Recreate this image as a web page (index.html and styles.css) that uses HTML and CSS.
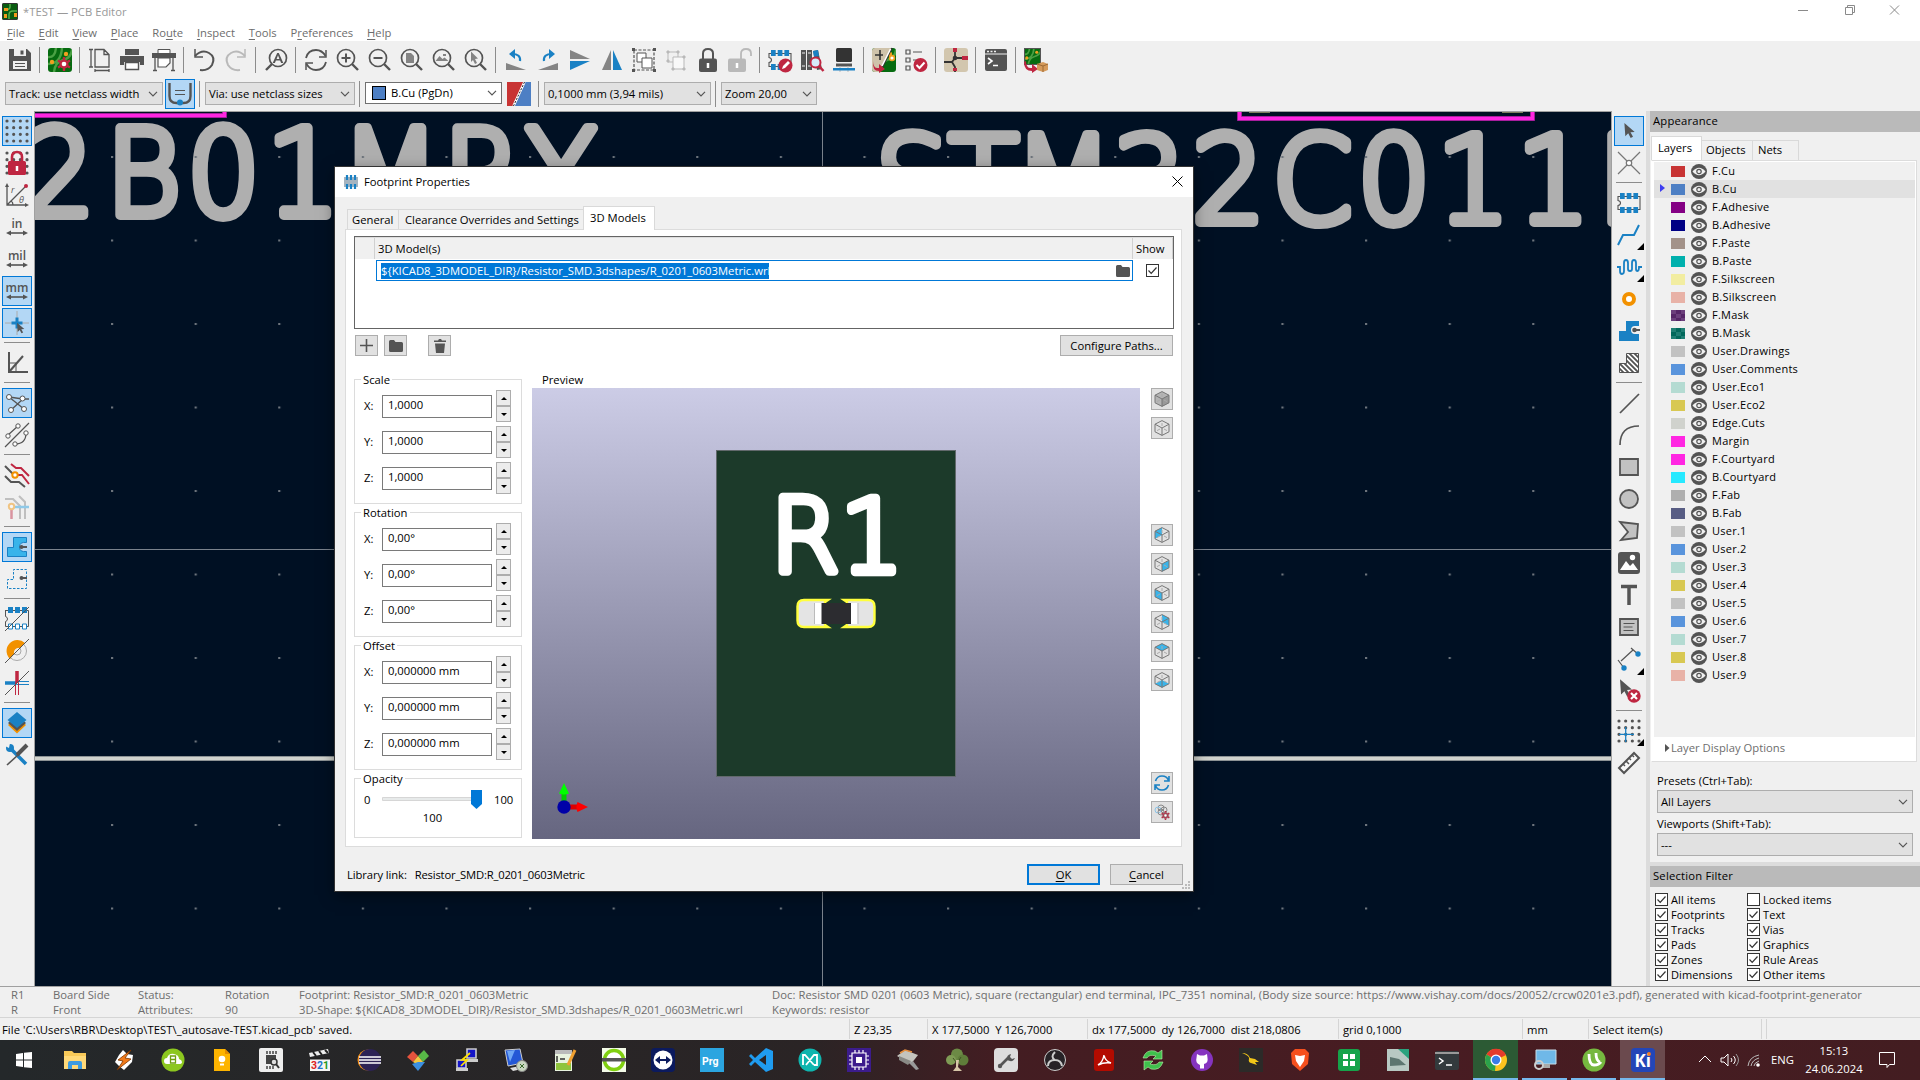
FILE: index.html
```html
<!DOCTYPE html>
<html lang="en">
<head>
<meta charset="utf-8">
<title>*TEST — PCB Editor</title>
<link rel="stylesheet" href="styles.css">
</head>
<body>
<svg class="defs" width="0" height="0">
  <symbol id="eye" viewBox="0 0 16 15"><ellipse cx="8" cy="7.5" rx="8" ry="7.5" fill="#545454"/><path d="M1.5 7.5Q8 0 14.5 7.5Q8 15 1.5 7.5z" fill="#f0f0f0"/><circle cx="8" cy="7.5" r="2.2" fill="none" stroke="#545454" stroke-width="1.2"/></symbol>
  <symbol id="tick" viewBox="0 0 13 13"><rect x=".5" y=".5" width="12" height="12" fill="#fff" stroke="#333"/><path d="M2.5 6.5l2.7 2.8L10.5 3.5" fill="none" stroke="#333" stroke-width="1.2"/></symbol>
  <symbol id="box" viewBox="0 0 13 13"><rect x=".5" y=".5" width="12" height="12" fill="#fff" stroke="#333"/></symbol>
  <symbol id="chev" viewBox="0 0 10 6"><path d="M1 .8l4 4 4-4" fill="none" stroke="#555" stroke-width="1.2"/></symbol>
  <symbol id="folder" viewBox="0 0 14 12"><path d="M0 1.5Q0 0 1.5 0H5l1.5 2H12.500q1.500 0 1.500 1.500V10.500q0 1.500-1.500 1.500h-11Q0 12 0 10.500z" fill="#545454"/></symbol>
  <symbol id="lens" viewBox="0 0 24 24"><g fill="none" stroke="#545454"><circle cx="10" cy="10" r="8.500" stroke-width="1.700"/><path d="M16 16l6 6" stroke-width="2.400"/></g></symbol>
  <symbol id="gear" viewBox="0 0 14 14"><g stroke="#bf2641" stroke-width="2.4"><path d="M7 0v14M1 3.500l12 7M1 10.500l12-7"/></g><circle cx="7" cy="7" r="4.600" fill="#bf2641"/><circle cx="7" cy="7" r="2.300" fill="#fff"/></symbol>
  <symbol id="cube" viewBox="0 0 16 16"><g fill="none" stroke="#777" stroke-width="1"><path d="M8 .6l7 3.600v7.600L8 15.400 1 11.800V4.200z"/><path d="M1 4.200L8 8l7-3.800M8 8v7.400"/><path d="M8 3v3M3 10.600l3-1.600M13 10.600l-3-1.600" stroke="#aaa"/></g></symbol>
  <symbol id="fp" viewBox="0 0 24 24"><path d="M1 5.500h22v13H1v-4q2.500-.5 2.500-2.500T1 9.500z" fill="none" stroke="#545454" stroke-width="1.100"/><path d="M3 2h4.700v6H3zM9.700 2h4.700v6H9.700zM16.400 2h4.700v6h-4.700zM3 16h4.700v6H3zM9.700 16h4.700v6H9.700zM16.400 16h4.700v6h-4.700z" fill="#1a81c4"/></symbol>
  <symbol id="dots" viewBox="0 0 24 24"><g stroke="#545454" stroke-width="3.200" stroke-linecap="round" stroke-dasharray="0 6.670" fill="none"><path d="M2 2h21M2 8.700h21M2 15.300h21M2 22h21"/></g></symbol>
  <symbol id="arrows" viewBox="0 0 24 6"><path d="M3 3h18" stroke="#545454" stroke-width="1.600"/><path d="M1 3l5-2.500v5zM23 3l-5-2.500v5z" fill="#545454"/></symbol>
  <symbol id="pointer" viewBox="0 0 12 16"><path d="M0 0l11 9.500-4.500.4 2.700 4.800-2.500 1.300-2.600-5L1 14z" fill="#545454"/></symbol>
  <symbol id="board" viewBox="0 0 24 24"><rect width="24" height="24" rx="3" fill="#066b10"/><path d="M0 9q7 1 8-9M0 16q13 0 14-16M6 24q1-10 9-12t9-10" fill="none" stroke="#4aa044" stroke-width="2.400"/><circle cx="4" cy="14" r="2.200" fill="#f0a020"/><circle cx="18" cy="6" r="2.200" fill="#f0a020"/></symbol>
</svg>

<header class="titlebar">
  <svg width="16" height="17"><rect width="16" height="17" rx="2" fill="#0a5c10"/><path d="M7 17V12q0-4 4-4h5M8 0v4q0 2-3 3" stroke="#57b04a" stroke-width="1.500" fill="none"/><path d="M2 5h4v3H2zM2 11h3v4H2zM12 10h3v4h-3z" fill="#f29a1c"/><rect x=".5" y=".5" width="15" height="16" rx="1" fill="none" stroke="#333"/></svg>
  <span>*TEST — PCB Editor</span>
  <svg class="winctl" width="110" height="12" fill="none" stroke="#8a8a8a"><path d="M4 6.500h10M51.500 3.500h7v7h-7zM53.500 3.500v-2h7v7h-2M96 1.500l9 9M105 1.500l-9 9"/></svg>
</header>
<nav class="menu"><span><u>F</u>ile</span><span><u>E</u>dit</span><span><u>V</u>iew</span><span><u>P</u>lace</span><span>Ro<u>u</u>te</span><span><u>I</u>nspect</span><span><u>T</u>ools</span><span>P<u>r</u>eferences</span><span><u>H</u>elp</span></nav>

<div class="bar bar1">
  <b><svg class="i" viewBox="0 0 24 24"><path d="M1 1h18l4 4v18H1z" fill="#545454"/><path d="M6 1h12v7H6z" fill="#f0f0f0"/><path d="M12.500 2.500h3v4h-3z" fill="#545454"/><path d="M5 13h14v8H5z" fill="#f0f0f0"/><path d="M7 15.500h10M7 18.500h10" stroke="#545454"/></svg></b><hr>
  <b><svg class="i" viewBox="0 0 24 24"><use href="#board"/><use href="#gear" x="9" y="9" width="14" height="14"/></svg></b><hr>
  <b><svg class="i" viewBox="0 0 24 24" fill="none" stroke="#545454" stroke-width="1.300"><path d="M7 1.500h9l5 5V19H7zM16 1.500v5h5M1 1.500h4M3 1.500V19M1 19h4M7 22.500h14M7 21v3M21 21v3"/></svg></b>
  <b><svg class="i" viewBox="0 0 24 24"><path d="M5 1h14v6H5zM0 8h24v9h-4v-3H4v3H0z" fill="#545454"/><path d="M5.500 14.500h13v7h-13z" fill="#fff" stroke="#545454" stroke-width="1.400"/></svg></b>
  <b><svg class="i" viewBox="0 0 24 24"><path d="M6 1.500h12v4H6z" fill="#fff" stroke="#545454"/><path d="M0 5h24v5H0z" fill="#545454"/><path d="M6 10h12v5l-4 4H6z" fill="#fff" stroke="#545454" stroke-width="1.200"/><path d="M3 10v12M21 10v12M1 22.500h4M19 22.500h4" stroke="#545454" stroke-width="1.300"/></svg></b><hr>
  <b><svg class="i" viewBox="0 0 24 24" fill="none" stroke="#545454" stroke-width="2"><path d="M3 8Q10 1 17 5t3 12q-4 6-12 5"/><path d="M3 1v8h8" stroke-width="1.500"/></svg></b>
  <b><svg class="i" viewBox="0 0 24 24" fill="none" stroke="#b9b9b9" stroke-width="2"><path d="M21 8Q14 1 7 5T4 17q4 6 12 5"/><path d="M21 1v8h-8" stroke-width="1.500"/></svg></b><hr>
  <b><svg class="i" viewBox="0 0 24 24"><g transform="matrix(-1 0 0 1 24 0)"><use href="#lens"/></g><path d="M8.700 15l4.500-10h1.600l4.500 10h-2.200l-1-2.500h-4.200l-1 2.500zM12.600 11h2.800L14 7.300z" fill="#545454"/></svg></b><hr>
  <b><svg class="i" viewBox="0 0 24 24" fill="none" stroke="#545454" stroke-width="1.800"><path d="M2 10Q4 2 12 2q6 0 9.500 6M22 14q-2 8-10 8-6 0-9.500-6"/><path d="M22 2v7h-7M2 22v-7h7" stroke-width="1.500"/></svg></b>
  <b><svg class="i" viewBox="0 0 24 24"><use href="#lens"/><path d="M5.500 10h9M10 5.500v9" stroke="#545454" stroke-width="2"/></svg></b>
  <b><svg class="i" viewBox="0 0 24 24"><use href="#lens"/><path d="M5.500 10h9" stroke="#545454" stroke-width="2"/></svg></b>
  <b><svg class="i" viewBox="0 0 24 24"><use href="#lens"/><path d="M6 5h5l3 3v7H6z" fill="#848484"/></svg></b>
  <b><svg class="i" viewBox="0 0 24 24"><use href="#lens"/><path d="M3.500 13l4-5 3 3 2-1.500 4 3.500zM11 6h3v2h-3z" fill="#848484"/></svg></b>
  <b><svg class="i" viewBox="0 0 24 24"><use href="#lens"/><path d="M7 3.500l7 7-3 .5 2 4-2 1-2-4-2 2z" fill="#848484"/></svg></b><hr>
  <b><svg class="i" viewBox="0 0 24 24"><path d="M2 15l20 7H2z" fill="#848484"/><path d="M16 13q1-7-8-7" fill="none" stroke="#1a81c4" stroke-width="2.200"/><path d="M11 1v10L5 6z" fill="#1a81c4"/></svg></b>
  <b><svg class="i" viewBox="0 0 24 24"><path d="M22 15L2 22h20z" fill="#848484"/><path d="M8 13q-1-7 8-7" fill="none" stroke="#1a81c4" stroke-width="2.200"/><path d="M13 1v10l6-5z" fill="#1a81c4"/></svg></b>
  <b><svg class="i" viewBox="0 0 24 24"><path d="M2 2l20 9H2z" fill="#848484"/><path d="M2 22l20-9H2z" fill="#1a81c4"/></svg></b>
  <b><svg class="i" viewBox="0 0 24 24"><path d="M2 22L11 2v20z" fill="#848484"/><path d="M22 22L13 2v20z" fill="#1a81c4"/></svg></b>
  <b><svg class="i" viewBox="0 0 24 24" fill="none"><path d="M2 2h20v20H2z" stroke="#545454" stroke-width="1.200" stroke-dasharray="3 1.500"/><path d="M0 0h3v3H0zM21 0h3v3h-3zM0 21h3v3H0zM21 21h3v3h-3z" fill="#545454"/><path d="M5 5h9v9H5z" fill="#fff" stroke="#545454"/><path d="M10 10h10v10H10z" fill="#fff" stroke="#545454"/></svg></b>
  <b><svg class="i" viewBox="0 0 24 24" fill="none" stroke="#b9b9b9"><path d="M4 4h10v10H4z"/><path d="M9 9h11v12H9z" fill="#f8f8f8"/><path d="M3 3h2v2H3zM13 3h2v2h-2zM3 12h2v2H3zM8 20h2v2H8zM19 8h2v2h-2zM19 20h2v2h-2z" fill="#b9b9b9"/></svg></b>
  <b><svg class="i" viewBox="0 0 24 24"><rect x="3" y="10.500" width="18" height="13.500" rx="2" fill="#545454"/><path d="M7 11V5.500q0-4.500 5-4.500t5 4.500V11" fill="none" stroke="#545454" stroke-width="2"/><path d="M12 15v5" stroke="#fff" stroke-width="2.500"/></svg></b>
  <b><svg class="i" viewBox="0 0 24 24"><rect x="0" y="10.500" width="18" height="13.500" rx="2" fill="#b9b9b9"/><path d="M13 11V5.500q0-4.500 5-4.500t5 4.500V8" fill="none" stroke="#b9b9b9" stroke-width="1.800"/><path d="M9 15v5" stroke="#fff" stroke-width="2.500"/></svg></b><hr>
  <b><svg class="i" viewBox="0 0 24 24"><use href="#fp" y="-1" width="24" height="26"/><circle cx="17.500" cy="17.500" r="7" fill="#bf2641"/><path d="M14 21l1-3 5-5 2 2-5 5z" fill="#fff"/></svg></b>
  <b><svg class="i" viewBox="0 0 24 24"><path d="M1 2h5v20H1zM7 2h5v20H7zM13 3l5-1 4 19-5 1z" fill="#545454"/><path d="M13 3l5-1 1 6-5 1z" fill="#1a81c4"/><path d="M2 5h3M8 5h3M2 18h3M8 18h3" stroke="#eee"/><circle cx="15.500" cy="14.500" r="5" fill="#d7ecfa" stroke="#bf2641" stroke-width="2"/><path d="M19 18l4.500 5" stroke="#bf2641" stroke-width="2.500"/></svg></b>
  <b><svg class="i" viewBox="0 0 24 24"><rect x="4" y="0" width="16" height="14" rx="1.500" fill="#333"/><path d="M4 15.500h16v3H4z" fill="#545454"/><path d="M8 18v6M16 18v6" stroke="#bbb"/><path d="M1 20h22v2.500H1z" fill="#1a81c4"/></svg></b><hr>
  <b><svg class="i" viewBox="0 0 24 24"><use href="#board"/><path d="M3 0h17L8 24H3q-3 0-3-3V3q0-3 3-3z" fill="#cfc3ab"/><path d="M3 7h8M8 2v10M20 0L9 22" stroke="#333" stroke-width="1.600"/><path d="M18.500 1L10 18" stroke="#fff" stroke-width="1.500"/><path d="M1 13q0 8 6 7v-4l6 5-6 4v-2q-7 0-6-10z" fill="#bf2641"/><circle cx="20" cy="10" r="2.400" fill="#fff" stroke="#f0a020" stroke-width="1.600"/></svg></b>
  <b><svg class="i" viewBox="0 0 24 24" fill="none" stroke="#545454" stroke-width="1.200"><path d="M2 2h4v4H2zM2 10h4v4H2zM2 18h4v4H2zM9 4h9M9 12h4"/><circle cx="16.500" cy="17" r="7" fill="#bf2641" stroke="none"/><path d="M12.500 17l3 3 5-5.500" stroke="#fff" stroke-width="2"/></svg></b><hr>
  <b><svg class="i" viewBox="0 0 24 24"><rect width="24" height="24" rx="3" fill="#d2c6ae"/><path d="M11 2v8l8 0M11 10l-3 4H0M8 14l3 5v5" fill="none" stroke="#333" stroke-width="1.800"/><circle cx="11" cy="10" r="2.300" fill="#333"/><path d="M9 0h4v4H9zM18 8h6v4h-6zM9 20h4v3H9z" fill="#bf2641"/></svg></b><hr>
  <b><svg class="i" viewBox="0 0 24 24"><rect x="1" y="1" width="22" height="22" rx="2" fill="#545454"/><path d="M1 6h22" stroke="#f0f0f0"/><path d="M3 3.500h2M6.500 3.500h2M10 3.500h2" stroke="#f0f0f0" stroke-width="1.500"/><path d="M4 10l4 3-4 3M9 17.500h5" fill="none" stroke="#fff" stroke-width="1.600"/></svg></b><hr>
  <b><svg class="i" viewBox="0 0 24 24"><use href="#board" width="17" height="17"/><rect x=".5" y=".5" width="16" height="16" fill="none" stroke="#555"/><path d="M2 13q0 8 6 7v-4l6 5-6 4v-2q-8 0-8-9z" fill="#bf2641"/><path d="M13 16l6-2 5 2v6l-5 2-6-2z" fill="#d59a5b"/><path d="M13 16l6 2 5-2M19 18v6" stroke="#9e6a34" fill="none"/></svg></b>
</div>
<div class="bar bar2">
  <div class="combo w158">Track: use netclass width<svg width="10" height="6"><use href="#chev"/></svg></div>
  <b class="on"><svg class="i" viewBox="0 0 24 24" fill="none" stroke="#545454"><path d="M1.500 1v13q0 7 7 7h7q7 0 7-7V1" stroke-width="2.400"/><path d="M7 8.500h10M7 12.500h10" stroke-width="1.200"/><circle cx="12" cy="20.500" r="3" fill="#1a81c4" stroke="none"/></svg></b><hr>
  <div class="combo w150">Via: use netclass sizes<svg width="10" height="6"><use href="#chev"/></svg></div><hr class="m1">
  <div class="combo lay"><i></i>B.Cu (PgDn)<svg width="10" height="6"><use href="#chev"/></svg></div>
  <svg class="pair" width="24" height="24"><path d="M0 0h18L7 24H0z" fill="#c83434"/><path d="M18 0h6v24H7z" fill="#4d7fc4"/><path d="M17.500 0L6.500 24" stroke="#fff" stroke-width="2.500"/><path d="M17.500 0L6.500 24" stroke="#222" stroke-width="1" stroke-dasharray="2 1.500"/></svg><hr class="m2">
  <div class="combo w167">0,1000 mm (3,94 mils)<svg width="10" height="6"><use href="#chev"/></svg></div><hr class="m3">
  <div class="combo w96">Zoom 20,00<svg width="10" height="6"><use href="#chev"/></svg></div>
</div>

<main class="work">
  <aside class="tools left">
    <b class="on"><svg class="i" viewBox="0 0 24 24"><use href="#dots"/></svg></b>
    <b><svg class="i" viewBox="0 0 24 24"><use href="#dots"/><rect x="3" y="10" width="18" height="14" rx="1.500" fill="#bf2641"/><path d="M7 11V6q0-5 5-5t5 5v5" fill="none" stroke="#bf2641" stroke-width="2.600"/><path d="M12 15v5" stroke="#fff" stroke-width="2.500"/></svg></b>
    <b><svg class="i" viewBox="0 0 24 24"><path d="M2 2v20h20M2 22L20 4M6 18q2 1 2 4" fill="none" stroke="#545454" stroke-width="1.300"/><path d="M2 0l2 4H0zM24 22l-4 2v-4z" fill="#545454"/><circle cx="21" cy="3" r="2" fill="#bf2641"/><text x="6" y="10" class="it">r</text><text x="14" y="20" class="it">θ</text></svg></b>
    <b><svg class="i" viewBox="0 0 24 24"><text x="12" y="13" class="unit">in</text><use href="#arrows" y="15" width="24" height="6"/></svg></b>
    <b><svg class="i" viewBox="0 0 24 24"><text x="12" y="13" class="unit">mil</text><use href="#arrows" y="15" width="24" height="6"/></svg></b>
    <b class="on"><svg class="i" viewBox="0 0 24 24"><text x="12" y="13" class="unit">mm</text><use href="#arrows" y="15" width="24" height="6"/></svg></b>
    <b class="on"><svg class="i" viewBox="0 0 24 24"><path d="M0 12h24M12 0v24" stroke="#aaa"/><path d="M6.500 12h11M12 6.500v11" stroke="#1a81c4" stroke-width="3"/><use href="#pointer" x="12" y="11" width="8" height="12"/></svg></b><hr>
    <b><svg class="i" viewBox="0 0 24 24" fill="none" stroke="#545454"><path d="M4 1v20h19" stroke-width="2"/><path d="M4 21L18 5" stroke-width="2"/><path d="M4 12h7v9"/></svg></b><hr>
    <b class="on"><svg class="i" viewBox="0 0 24 24" fill="#fff" stroke="#545454"><path d="M4 6l14 2h6M6 19L18 8M4 6l15 12" stroke-width="1.300"/><circle cx="4" cy="6" r="2.500"/><circle cx="17.500" cy="7.500" r="2.500"/><circle cx="6" cy="19" r="2.500"/><circle cx="19" cy="18" r="2.500"/></svg></b>
    <b><svg class="i" viewBox="0 0 24 24" fill="none" stroke="#545454"><path d="M0 24L24 0M3 12L13 3M10 21q11 0 11-11" stroke-width="1.200"/><g fill="#fff"><circle cx="3" cy="13" r="2.200"/><circle cx="13" cy="3" r="2.200"/><circle cx="21" cy="10" r="2.200"/><circle cx="10" cy="21" r="2.200"/></g></svg></b><hr>
    <b><svg class="i" viewBox="0 0 24 24" fill="none" stroke-width="2"><path d="M0 3l8 8M0 13l6 6h8l6 5" stroke="#545454"/><path d="M6 1l5 4h5l8 8M11 12h6l7 9" stroke="#bf2641"/><circle cx="10" cy="12" r="2.700" fill="#fff" stroke="#f29100"/></svg></b>
    <b><svg class="i" viewBox="0 0 24 24" fill="none" opacity=".45" stroke-width="2.500"><path d="M0 4h8l7 7v13M14 1l6 6v17" stroke="#848484" stroke-width="2"/><path d="M8 12h16" stroke="#1a9ae0"/><path d="M6.500 14v10" stroke="#bf2641"/><circle cx="6.500" cy="11.500" r="2.700" stroke="#f29100" stroke-width="2" fill="#fff"/></svg></b><hr>
    <b class="on"><svg class="i" viewBox="0 0 24 24"><path d="M2.500 21.500v-9h6v-10h13v5q-7-1-7 4.500t7 4.500v5z" fill="#39b4ea" stroke="#1a81c4"/><path d="M17 12h5" stroke="#545454" stroke-width="2"/><circle cx="16.500" cy="12" r="2" fill="#545454"/></svg></b>
    <b><svg class="i" viewBox="0 0 24 24"><path d="M2.500 21.500v-9h6v-10h13v19z" fill="none" stroke="#1a81c4" stroke-dasharray="2.500 1.500"/><path d="M17 11h5" stroke="#545454" stroke-width="2"/><circle cx="16.500" cy="11" r="2" fill="#545454"/></svg></b><hr>
    <b><svg class="i" viewBox="0 0 24 24"><path d="M0 3.500h23.500v16H.5v-5q2-.5 2-2.500t-2-2.500V4" fill="none" stroke="#545454"/><path d="M3 0h5v6H3zM10 0h5v6h-5zM17 0h5v6h-5z" fill="#1a81c4"/><path d="M3.500 17h4v5h-4zM10.500 17h4v5h-4zM17.500 17h4v5h-4z" fill="#fff" stroke="#1a81c4"/><path d="M0 24L24 0" stroke="#545454"/></svg></b>
    <b><svg class="i" viewBox="0 0 24 24"><circle cx="12" cy="12" r="9.500" fill="none" stroke="#aaa"/><circle cx="12" cy="12" r="4" fill="none" stroke="#aaa"/><path d="M5 20A10.500 10.500 0 0 1 20 4l-5 5a5 5 0 0 0-6 6z" fill="#f29100"/><path d="M0 24L24 0" stroke="#545454"/></svg></b>
    <b><svg class="i" viewBox="0 0 24 24"><path d="M0 12h12" stroke="#1a81c4" stroke-width="3.500"/><path d="M12 10.500h12M12 13.500h12" stroke="#1a81c4"/><path d="M12 0v12" stroke="#bf2641" stroke-width="3.500"/><path d="M10.500 12v12M13.500 12v12" stroke="#bf2641"/><path d="M0 24L24 0" stroke="#545454"/></svg></b><hr>
    <b class="on"><svg class="i" viewBox="0 0 24 24"><path d="M12 6l9 8-9 8.500L3 14z" fill="#f29100"/><path d="M12 4l9 8-9 8-9-8z" fill="#545454"/><path d="M12 1l9.500 8L12 17 2.500 9z" fill="#1a81c4"/></svg></b>
    <b><svg class="i" viewBox="0 0 24 24"><path d="M5 5l16 16" stroke="#1a81c4" stroke-width="3.500"/><circle cx="5" cy="5" r="4" fill="#1a81c4"/><path d="M0 3l4 2 1-5-5-1z" fill="#f0f0f0"/><path d="M22 2L12 12" stroke="#545454" stroke-width="4"/><path d="M13 12L2 22" stroke="#545454" stroke-width="1.600"/></svg></b>
  </aside>

  <svg class="canvas" viewBox="35 112 1576 874" width="1576" height="874">
    <defs><pattern id="grid" patternUnits="userSpaceOnUse" x="111" y="156" width="83.600" height="83.500"><rect width="2.200" height="2" fill="#6d747c"/></pattern></defs>
    <rect x="35" y="112" width="1576" height="874" fill="#001023"/>
    <g class="fab">
      <text transform="translate(0 214.500) scale(.96 1)" x="61 149.500 232.800 316 406.800 503.100 584.400">2B01MRY</text>
      <text transform="translate(0 221.500) scale(.96 1)" x="950 1024.500 1107.800 1197 1279.700 1367.200 1452 1535 1618.200 1699">STM32C011F</text>
    </g>
    <rect x="35" y="112" width="1576" height="874" fill="url(#grid)"/>
    <path d="M35 115.500H224.500V112M1239.500 112V118.500H1532.500V112" fill="none" stroke="#8a1c86" stroke-width="5"/>
    <path d="M35 115.500H224.500V112M1239.500 112V118.500H1532.500V112" fill="none" stroke="#ff26e2" stroke-width="3.400"/>
    <path d="M1249 112.500h21M1502 112.500h21" stroke="#7d7d5c"/>
    <path d="M35 549.500H1611M822.500 112V986" stroke="#7a828c"/>
    <path d="M35 758.500H1611" stroke="#8c9294" stroke-width="5"/><path d="M35 758.500H1611" stroke="#d0d2cd" stroke-width="3"/>
  </svg>

  <aside class="tools right">
    <b class="on"><svg class="i" viewBox="0 0 24 24"><use href="#pointer" x="7" y="4" width="12" height="15"/></svg></b>
    <b><svg class="i" viewBox="0 0 24 24" fill="none" stroke="#777" stroke-width="1.200"><path d="M1 1l22 22M23 1L1 23"/><circle cx="12" cy="12" r="2.700" fill="#fff"/></svg></b><hr>
    <b><svg class="i" viewBox="0 0 24 24"><use href="#fp" y="-1" width="24" height="26"/></svg></b>
    <b><svg class="i" viewBox="0 0 24 24"><path d="M1 22l5-10h11l5-10" fill="none" stroke="#1a81c4" stroke-width="2"/></svg></b>
    <b><svg class="i" viewBox="0 0 24 24"><path d="M0 12h3v4q0 3 2 3t2-3V8q0-3 2-3t2 3v6q0 2 2 2t2-2V8q0-3 2-3t2 3v6q0 2 1.500 2t1.500-4h3" fill="none" stroke="#1a81c4" stroke-width="1.800"/></svg></b>
    <b><svg class="i" viewBox="0 0 24 24"><circle cx="12" cy="12" r="5" fill="#fff" stroke="#f29100" stroke-width="4"/></svg></b>
    <b><svg class="i" viewBox="0 0 24 24"><path d="M2 22V12h7V2h13v5h-4q-4 0-4 4t4 4h4v7z" fill="#1a81c4"/><path d="M18 11h5" stroke="#545454" stroke-width="2"/><circle cx="17.500" cy="11" r="2.300" fill="#545454"/></svg></b>
    <b><svg class="i" viewBox="0 0 24 24"><clipPath id="hz"><path d="M2.500 21.500v-9h7v-10h12v19z"/></clipPath><path d="M2.500 21.500v-9h7v-10h12v19z" fill="#fff" stroke="#545454"/><path clip-path="url(#hz)" d="M2 12l12 12M-3 12l12 12M4 9l16 16M4 4l22 22M7 2l22 22M12 2l22 22M17 2l8 8" stroke="#545454" stroke-width="1.800"/></svg></b><hr>
    <b><svg class="i" viewBox="0 0 24 24"><path d="M3 22L22 3" stroke="#545454" stroke-width="1.700"/></svg></b>
    <b><svg class="i" viewBox="0 0 24 24"><path d="M3 22Q3 3 22 3" fill="none" stroke="#545454" stroke-width="1.700"/></svg></b>
    <b><svg class="i" viewBox="0 0 24 24"><path d="M3 4h18v16H3z" fill="#c2c2c2" stroke="#545454" stroke-width="1.800"/></svg></b>
    <b><svg class="i" viewBox="0 0 24 24"><circle cx="12" cy="12" r="9" fill="#c2c2c2" stroke="#545454" stroke-width="1.800"/></svg></b>
    <b><svg class="i" viewBox="0 0 24 24"><path d="M3 3l18 2-1 14-16 2 7-8z" fill="#c2c2c2" stroke="#545454" stroke-width="1.800"/></svg></b>
    <b><svg class="i" viewBox="0 0 24 24"><rect x="1" y="1" width="22" height="22" rx="3" fill="#545454"/><path d="M3 19l6-9 4 5 3-3 5 7z" fill="#fff"/><circle cx="15.500" cy="6.500" r="2.700" fill="#fff"/></svg></b>
    <b><svg class="i" viewBox="0 0 24 24"><path d="M4 3.500h16M12 3.500V22" stroke="#545454" stroke-width="3.500"/></svg></b>
    <b><svg class="i" viewBox="0 0 24 24"><path d="M3 4h18v16H3z" fill="#c2c2c2" stroke="#545454" stroke-width="1.800"/><path d="M6.500 8.500h11M6.500 12h9M6.500 15.500h10" stroke="#545454"/></svg></b>
    <b><svg class="i" viewBox="0 0 24 24"><path d="M1 13l6 8M14 1l8 7M4 14L16 3" stroke="#545454" stroke-width="1.200"/><circle cx="21" cy="7" r="2.700" fill="#1a81c4"/><circle cx="7" cy="21" r="2.700" fill="#1a81c4"/></svg></b>
    <b><svg class="i" viewBox="0 0 24 24"><use href="#pointer" x="3" y="0" width="13" height="18"/><circle cx="17" cy="17" r="6.700" fill="#bf2641"/><path d="M14 14l6 6M20 14l-6 6" stroke="#fff" stroke-width="2.200"/></svg></b><hr>
    <b><svg class="i" viewBox="0 0 24 24"><use href="#dots"/><path d="M2 15.300h15M8.700 8v15" stroke="#1a81c4" stroke-width="1.300"/></svg></b>
    <b><svg class="i" viewBox="0 0 24 24"><path d="M2 17L17 2l5 5L7 22z" fill="#f8f8f8" stroke="#545454" stroke-width="2"/><path d="M6 13l2 2M9 10l3 3M12 7l2 2M15 4l2 2" stroke="#545454" stroke-width="1.500"/></svg></b>
    <svg class="corners" viewBox="0 0 7 540" width="7" height="540"><path d="M7 0v7H0zM7 32v7H0zM7 425v7H0zM7 496v7H0z"/></svg>
  </aside>

  <aside class="appear">
    <h2>Appearance</h2>
    <div class="tabs"><span class="sel">Layers</span><span>Objects</span><span>Nets</span></div>
    <div class="sheet">
      <ul class="layers">
        <li><i class="c1"></i><svg><use href="#eye"/></svg>F.Cu</li>
        <li class="cur"><i class="c2"></i><svg><use href="#eye"/></svg>B.Cu</li>
        <li><i class="c3"></i><svg><use href="#eye"/></svg>F.Adhesive</li>
        <li><i class="c4"></i><svg><use href="#eye"/></svg>B.Adhesive</li>
        <li><i class="c5"></i><svg><use href="#eye"/></svg>F.Paste</li>
        <li><i class="c6"></i><svg><use href="#eye"/></svg>B.Paste</li>
        <li><i class="c7"></i><svg><use href="#eye"/></svg>F.Silkscreen</li>
        <li><i class="c8"></i><svg><use href="#eye"/></svg>B.Silkscreen</li>
        <li><i class="c9"></i><svg><use href="#eye"/></svg>F.Mask</li>
        <li><i class="c10"></i><svg><use href="#eye"/></svg>B.Mask</li>
        <li><i class="u1"></i><svg><use href="#eye"/></svg>User.Drawings</li>
        <li><i class="u2"></i><svg><use href="#eye"/></svg>User.Comments</li>
        <li><i class="u3"></i><svg><use href="#eye"/></svg>User.Eco1</li>
        <li><i class="u4"></i><svg><use href="#eye"/></svg>User.Eco2</li>
        <li><i class="c11"></i><svg><use href="#eye"/></svg>Edge.Cuts</li>
        <li><i class="c12"></i><svg><use href="#eye"/></svg>Margin</li>
        <li><i class="c12"></i><svg><use href="#eye"/></svg>F.Courtyard</li>
        <li><i class="c13"></i><svg><use href="#eye"/></svg>B.Courtyard</li>
        <li><i class="c14"></i><svg><use href="#eye"/></svg>F.Fab</li>
        <li><i class="c15"></i><svg><use href="#eye"/></svg>B.Fab</li>
        <li><i class="u1"></i><svg><use href="#eye"/></svg>User.1</li>
        <li><i class="u2"></i><svg><use href="#eye"/></svg>User.2</li>
        <li><i class="u3"></i><svg><use href="#eye"/></svg>User.3</li>
        <li><i class="u4"></i><svg><use href="#eye"/></svg>User.4</li>
        <li><i class="u1"></i><svg><use href="#eye"/></svg>User.5</li>
        <li><i class="u2"></i><svg><use href="#eye"/></svg>User.6</li>
        <li><i class="u3"></i><svg><use href="#eye"/></svg>User.7</li>
        <li><i class="u4"></i><svg><use href="#eye"/></svg>User.8</li>
        <li><i class="c8"></i><svg><use href="#eye"/></svg>User.9</li>
      </ul>
      <div class="ldo"><svg width="5" height="8"><path d="M0 0l4.500 4L0 8z" fill="#555"/></svg>Layer Display Options</div>
    </div>
    <div class="presets">
      <label>Presets (Ctrl+Tab):</label>
      <div class="combo">All Layers<svg width="10" height="6"><use href="#chev"/></svg></div>
      <label>Viewports (Shift+Tab):</label>
      <div class="combo">---<svg width="10" height="6"><use href="#chev"/></svg></div>
    </div>
    <h2 class="second">Selection Filter</h2>
    <div class="filter">
      <span><svg><use href="#tick"/></svg>All items</span><span><svg><use href="#box"/></svg>Locked items</span>
      <span><svg><use href="#tick"/></svg>Footprints</span><span><svg><use href="#tick"/></svg>Text</span>
      <span><svg><use href="#tick"/></svg>Tracks</span><span><svg><use href="#tick"/></svg>Vias</span>
      <span><svg><use href="#tick"/></svg>Pads</span><span><svg><use href="#tick"/></svg>Graphics</span>
      <span><svg><use href="#tick"/></svg>Zones</span><span><svg><use href="#tick"/></svg>Rule Areas</span>
      <span><svg><use href="#tick"/></svg>Dimensions</span><span><svg><use href="#tick"/></svg>Other items</span>
    </div>
  </aside>
</main>

<section class="info">
  <div>R1<br>R</div><div>Board Side<br>Front</div><div>Status:<br>Attributes:</div><div>Rotation<br>90</div>
  <div class="wide">Footprint: Resistor_SMD:R_0201_0603Metric<br>3D-Shape: ${KICAD8_3DMODEL_DIR}/Resistor_SMD.3dshapes/R_0201_0603Metric.wrl</div>
  <div class="doc">Doc: Resistor SMD 0201 (0603 Metric), square (rectangular) end terminal, IPC_7351 nominal, (Body size source: https://www.vishay.com/docs/20052/crcw0201e3.pdf), generated with kicad-footprint-generator<br>Keywords: resistor</div>
</section>
<footer class="status"><span>File 'C:\Users\RBR\Desktop\TEST\_autosave-TEST.kicad_pcb' saved.</span><span>Z 23,35</span><span>X 177,5000&nbsp; Y 126,7000</span><span>dx 177,5000&nbsp; dy 126,7000&nbsp; dist 218,0806</span><span>grid 0,1000</span><span>mm</span><span>Select item(s)</span><span></span></footer>

<div class="taskbar">
  <b><svg class="t" viewBox="0 0 24 24"><path d="M4 6l7-1v6.500H4zM12 4.800L20 4v7.500h-8zM4 12.500h7V19l-7-1zM12 12.500h8V20l-8-.8z" fill="#fff"/></svg></b>
  <b><svg class="t" viewBox="0 0 24 24"><path d="M1 3h8l2 2h12v16H1z" fill="#f8c958"/><path d="M1 8h22v13H1z" fill="#ffd978"/><path d="M5 21v-6q0-2 2-2h10q2 0 2 2v6h-4v-4H9v4z" fill="#3d9be0"/></svg></b>
  <b><svg class="t" viewBox="0 0 24 24"><path d="M11 2l4 4 6 1-1 7-8 8-5-4-4-4 4-7z" fill="#fff"/><path d="M19 2L6 12l5 1-6 9 14-11-6-1z" fill="#f07a1a" stroke="#7a3300" stroke-width=".8"/></svg></b>
  <b><svg class="t" viewBox="0 0 24 24"><circle cx="12" cy="12" r="11.500" fill="#8cc71f"/><path d="M6 16q-3 0-3-3t3-3q2-5 7-4t5 5q3 1 3 3t-3 2z" fill="#fff"/><path d="M9.500 8h5v7h-5zM9.500 11.500h5" fill="none" stroke="#6fa00f" stroke-width="1.300"/></svg></b>
  <b><svg class="t" viewBox="0 0 24 24"><path d="M4 1h11l5 5v17H4z" fill="#fdb400"/><path d="M15 1l5 5h-5z" fill="#e38b00"/><circle cx="12" cy="11" r="3.300" fill="#fff"/><path d="M10 15.500h4v2h-4z" fill="#fff"/></svg></b>
  <b><svg class="t" viewBox="0 0 24 24"><rect width="24" height="24" rx="2" fill="#eee"/><path d="M7 7h10v9H7z" fill="#444"/><path d="M8 3v3M11 3v3M14 3v3M17 3v3M8 18v3M11 18v3M14 18v3" stroke="#444" stroke-width="1.500"/><circle cx="15" cy="14" r="3" fill="#ddd" stroke="#333" stroke-width="1.500"/><path d="M17 16l3 4" stroke="#333" stroke-width="2"/></svg></b>
  <b><svg class="t" viewBox="0 0 24 24"><path d="M2 10h20v13H2z" fill="#f5f5f5"/><path d="M1 5l19-4 1 4L2 9z" fill="#eee"/><path d="M5 4l3 4M11 3l3 4M17 2l3 3M2 10.500h20" stroke="#222" stroke-width="2"/><text class="m"  x="3" y="21"><tspan fill="#d22">3</tspan><tspan fill="#27c">2</tspan><tspan fill="#292">1</tspan></text></svg></b>
  <b><svg class="t" viewBox="0 0 24 24"><circle cx="11" cy="12" r="10.500" fill="#f7941e"/><circle cx="13" cy="12" r="11" fill="#2c2255"/><path d="M2 9h22M2 12h22M2 15h22" stroke="#fff" stroke-width="1.500"/></svg></b>
  <b><svg class="t" viewBox="0 0 24 24"><path d="M1 9l6-6 5 5-5 6z" fill="#e5533d"/><path d="M12 8l6-6 5 6-6 6z" fill="#58b947"/><path d="M7 14l5-6 5 6-5 3z" fill="#f5c842"/><path d="M6 16l6-2 7 0-7 9z" fill="#3c8fe0"/></svg></b>
  <b><svg class="t" viewBox="0 0 24 24"><path d="M12 1h9v9h-9zM2 12h9v8H2z" fill="#1414c8" stroke="#ccc" stroke-width="1.600"/><path d="M11 11h12v3H11zM1 20h12v3H1z" fill="#ccc"/><path d="M15 5l-8 7 5 0-6 6" fill="none" stroke="#ffe100" stroke-width="1.700"/></svg></b>
  <b><svg class="t" viewBox="0 0 24 24"><path d="M1 2l15-1 3 14-15 3z" fill="#2457d6" stroke="#ccc"/><path d="M3 3l8-1-5 12z" fill="#6fa7f5"/><path d="M6 20l10-2 2 3-9 2z" fill="#ddd"/><circle cx="18" cy="18" r="5.500" fill="#c8d6c0" stroke="#888"/><path d="M16 16l2 2-2 2M20 16l-2 2 2 2" stroke="#386b2a" fill="none"/></svg></b>
  <b><svg class="t" viewBox="0 0 24 24"><path d="M2 2h17v21H2z" fill="#e9f3df"/><path d="M3 15h15v7H3z" fill="#8fc43c"/><path d="M2 2h17v4H2z" fill="#bbb"/><path d="M4 8v6M7 11h5" stroke="#333" stroke-width="1.500"/><path d="M22 2l-7 15" stroke="#f0a030" stroke-width="3"/></svg></b>
  <b><svg class="t" viewBox="0 0 24 24"><path d="M0 0h24v24H0z" fill="#f4fbe8"/><circle cx="12" cy="12" r="9.500" fill="#fff" stroke="#80d010" stroke-width="3.500"/><path d="M0 10h24v3.500H0z" fill="#555"/></svg></b>
  <b><svg class="t" viewBox="0 0 24 24"><rect width="24" height="24" rx="4" fill="#0b1a5e"/><circle cx="12" cy="12" r="9.500" fill="#fff"/><path d="M4 12l5-4v3h6V8l5 4-5 4v-3H9v3z" fill="#0b1a5e"/></svg></b>
  <b><svg class="t" viewBox="0 0 24 24"><path d="M0 0h24v24H0z" fill="#2ba5e0"/><text class="m" x="2" y="16.500" fill="#fff">Prg</text></svg></b>
  <b><svg class="t" viewBox="0 0 24 24"><path d="M17 0l7 3v18l-7 3L6 14l-4 4-2-2 4-4-4-4 2-2 4 4zM17 7l-7 5 7 5z" fill="#1f9cf0" fill-rule="evenodd"/></svg></b>
  <b><svg class="t" viewBox="0 0 24 24"><circle cx="12" cy="12" r="11.500" fill="#0fb5ae"/><path d="M5 17V7h2l9 10M8 17l8-10h3v10h-3" fill="none" stroke="#fff" stroke-width="1.800"/></svg></b>
  <b><svg class="t" viewBox="0 0 24 24"><path d="M0 0h24v24H0z" fill="#3c1c8c"/><path d="M5 5h14v14H5zM8 2v3M12 2v3M16 2v3M8 19v3M12 19v3M16 19v3M2 8h3M2 12h3M2 16h3M19 8h3M19 12h3M19 16h3" fill="none" stroke="#fff" stroke-width="1.200"/><path d="M9 9h6v6H9z" fill="#fff"/></svg></b>
  <b><svg class="t" viewBox="0 0 24 24"><path d="M1 8l8-6 13 5-7 9z" fill="#c4c4be"/><path d="M3 8l12 5-3 4-9-5z" fill="#898985"/><path d="M13 15l4-2 6 8-3 1z" fill="#999"/><path d="M4 5l5-3 7 2" stroke="#e69040" stroke-width="1.500" fill="none"/></svg></b>
  <b><svg class="t" viewBox="0 0 24 24"><circle cx="12" cy="6.500" r="6" fill="#6c8a45"/><circle cx="6" cy="12" r="5" fill="#7f9c55"/><circle cx="18" cy="12" r="5.500" fill="#5f7d3a"/><path d="M8 10l3 4M16 9l-3 5" stroke="#3f5524"/><path d="M11 12h3l-1 7 4 4H8l3-4z" fill="#d7c6a8"/></svg></b>
  <b><svg class="t" viewBox="0 0 24 24"><rect width="24" height="24" rx="4" fill="#ddd"/><path d="M6 18l8-8" stroke="#555" stroke-width="2.600"/><path d="M13 12q-1-5 4-6l-1 3 2 2 3-1q-2 5-8 2z" fill="#555"/><circle cx="6" cy="18" r="2.200" fill="#555"/></svg></b>
  <b><svg class="t" viewBox="0 0 24 24"><circle cx="12" cy="12" r="10.500" fill="#272327" stroke="#ccc"/><path d="M12 4q-5 5 0 8M12 12q6 0 7 6M12 12q-7 0-7 6" fill="none" stroke="#ccc" stroke-width="2"/></svg></b>
  <b><svg class="t" viewBox="0 0 24 24"><rect x="2" y="1" width="20" height="22" rx="3" fill="#b30b00"/><path d="M6 17q5-3 6-10q1 6 7 8q-7-1-13 2z" fill="none" stroke="#fff" stroke-width="1.500"/></svg></b>
  <b><svg class="t" viewBox="0 0 24 24"><path d="M2 10Q5 1 14 3l3 2 4-3v9h-9l3-3Q8 6 6 10zM22 14q-3 9-12 7l-3-2-4 3v-9h9l-3 3q7 2 9-2z" fill="#3fc14c" stroke="#bff0b0" stroke-width=".6"/></svg></b>
  <b><svg class="t" viewBox="0 0 24 24"><circle cx="12" cy="12" r="11" fill="#8534bf"/><path d="M7 6l3 1.500h4L17 6l.5 4q1 5-3.500 6v4.500h-4V17Q5 15 6.500 10z" fill="#fff"/></svg></b>
  <b><svg class="t" viewBox="0 0 24 24"><path d="M0 0h24v24H0z" fill="#2c2a28"/><path d="M3 5q6 0 8 5l5 1 4 3-4 0 2 3-6-2q-3-1-2-4T3 5z" fill="#f2c618"/></svg></b>
  <b><svg class="t" viewBox="0 0 24 24"><path d="M7 1h10l4 4-1 11-8 7-8-7L3 5z" fill="#f5501e"/><path d="M7 7l5 1 5-1-1 6-4 6-4-6z" fill="#fff"/></svg></b>
  <b><svg class="t" viewBox="0 0 24 24"><rect x="1" y="1" width="22" height="22" rx="3" fill="#16a34a"/><path d="M6 6h5v5H6zM13 6h5v5h-5zM6 13h5v5H6zM13 13h5v5h-5z" fill="#fff"/></svg></b>
  <b><svg class="t" viewBox="0 0 24 24"><path d="M1 1h22v22H1z" fill="#b8c9c3"/><path d="M12 1h11v10z" fill="#2ba37e"/><path d="M4 9l9 2 7 6-16 1z" fill="#5d7670"/></svg></b>
  <b><svg class="t" viewBox="0 0 24 24"><rect x="0" y="3" width="24" height="19" rx="2" fill="#333a3d"/><path d="M0 5h24" stroke="#999" stroke-width="2"/><path d="M4 10l4 3-4 3M11 17h6" stroke="#fff" fill="none" stroke-width="1.500"/></svg></b>
  <b class="run chrome"><svg class="t" viewBox="0 0 24 24"><circle cx="12" cy="12" r="11" fill="#fcc31e"/><path d="M12 12L2.500 6.500A11 11 0 0 1 22 7z" fill="#e53b2c"/><path d="M12 12L2.500 6.500A11 11 0 0 0 11 23z" fill="#2ba24c"/><circle cx="12" cy="12" r="5.500" fill="#fff"/><circle cx="12" cy="12" r="4.200" fill="#3a7de8"/></svg></b>
  <b class="run"><svg class="t" viewBox="0 0 24 24"><path d="M3 2h20v14H3z" fill="#6fb8e8" stroke="#c8dce8"/><path d="M9 16h8v4H9z" fill="#aaa"/><circle cx="6" cy="17" r="4" fill="none" stroke="#ccc" stroke-width="2"/></svg></b>
  <b class="run"><svg class="t" viewBox="0 0 24 24"><circle cx="12" cy="12" r="11.500" fill="#76b83f"/><path d="M7 6q0 11 5 11t7-3M14 5q0 8 4 9" fill="none" stroke="#fff" stroke-width="2.800"/></svg></b>
  <b class="run act"><svg class="t" viewBox="0 0 24 24"><rect width="24" height="24" rx="4" fill="#2346b8"/><text class="ki" x="3.500" y="18.500" fill="#fff">Ki</text><circle cx="18" cy="6" r="1.900" fill="#f57c1f"/></svg></b>
  <div class="tray">
    <svg width="76" height="20" fill="none" stroke="#fff"><path d="M1 12l6-6 6 6"/><path d="M23 8h3l4-4v12l-4-4h-3zM33 8q2 2 0 4M35.500 6q3.500 4 0 8"/><path d="M38 4q5 6 0 12" stroke="#999"/><path d="M50 16q1-9 11-11M53 16q1-6 8-8M56 16q0-3 5-5" stroke="#bbb"/><circle cx="60" cy="15" r="1.800" fill="#fff" stroke="none"/></svg>
    <span>ENG</span><span class="clock">15:13<br>24.06.2024</span>
    <svg width="18" height="18" fill="none" stroke="#fff"><path d="M1.500 1.500h15v12h-5l-2.500 3v-3H1.500z"/></svg>
  </div>
</div>

<div class="dialog">
  <div class="dtitle"><svg width="14" height="14" viewBox="0 0 14 14"><path d="M0 2h14v10H0z" fill="#a5b4c0"/><path d="M3 0v5M7 0v5M11 0v5M3 9v5M7 9v5M11 9v5" stroke="#1a81c4" stroke-width="2.200"/></svg><span>Footprint Properties</span><svg width="11" height="11" stroke="#000"><path d="M.5 .5l10 10M10.500 .5l-10 10"/></svg></div>
  <div class="dtabs"><span class="g">General</span><span class="c">Clearance Overrides and Settings</span><span class="sel">3D Models</span></div>
  <div class="dpanel">
    <div class="table">
      <div class="th"><span></span><span>3D Model(s)</span><span>Show</span></div>
      <div class="tr"><div class="edit"><mark>${KICAD8_3DMODEL_DIR}/Resistor_SMD.3dshapes/R_0201_0603Metric.wrl</mark><svg width="14" height="12"><use href="#folder"/></svg></div><svg width="13" height="13"><use href="#tick"/></svg></div>
    </div>
    <div class="btns">
      <button class="sq"><svg width="15" height="15"><path d="M7.500 1v13M1 7.500h13" stroke="#545454" stroke-width="1.600"/></svg></button>
      <button class="sq"><svg width="14" height="12"><use href="#folder"/></svg></button>
      <button class="sq trash"><svg width="12" height="14" fill="#545454"><path d="M0 1.500h4L5 0h2l1 1.500h4V3H0zM1 4.500h10L10 14H2z"/></svg></button>
      <button class="conf">Configure Paths...</button>
    </div>
    <div class="cols">
      <div class="sets">
        <fieldset><legend>Scale</legend>
          <div class="row"><label>X:</label><input value="1,0000"><span class="spin"><i></i><i class="dn"></i></span></div>
          <div class="row"><label>Y:</label><input value="1,0000"><span class="spin"><i></i><i class="dn"></i></span></div>
          <div class="row"><label>Z:</label><input value="1,0000"><span class="spin"><i></i><i class="dn"></i></span></div>
        </fieldset>
        <fieldset><legend>Rotation</legend>
          <div class="row"><label>X:</label><input value="0,00°"><span class="spin"><i></i><i class="dn"></i></span></div>
          <div class="row"><label>Y:</label><input value="0,00°"><span class="spin"><i></i><i class="dn"></i></span></div>
          <div class="row"><label>Z:</label><input value="0,00°"><span class="spin"><i></i><i class="dn"></i></span></div>
        </fieldset>
        <fieldset><legend>Offset</legend>
          <div class="row"><label>X:</label><input value="0,000000 mm"><span class="spin"><i></i><i class="dn"></i></span></div>
          <div class="row"><label>Y:</label><input value="0,000000 mm"><span class="spin"><i></i><i class="dn"></i></span></div>
          <div class="row"><label>Z:</label><input value="0,000000 mm"><span class="spin"><i></i><i class="dn"></i></span></div>
        </fieldset>
        <fieldset class="opac"><legend>Opacity</legend>
          <div class="slide"><span>0</span><svg width="102" height="19"><path d="M.5 7.500h96v3h-96z" fill="#e7eaea" stroke="#d6d6d6"/><path d="M89 0h11v14l-5.500 5L89 14z" fill="#0078d7"/></svg><span>100</span></div>
          <div class="val">100</div>
        </fieldset>
      </div>
      <div class="prev">
        <div class="cap">Preview</div>
        <svg viewBox="532 388 608 451" width="608" height="451">
          <defs><linearGradient id="sky" x2="0" y2="1"><stop offset="0" stop-color="#cccce6"/><stop offset="1" stop-color="#666680"/></linearGradient></defs>
          <rect x="532" y="388" width="608" height="451" fill="url(#sky)"/>
          <rect x="716.500" y="450.500" width="239" height="326" fill="#1c3a2a" stroke="#62696c"/>
          <g class="silk"><text transform="translate(0 571.500) scale(.98 1)" x="821.400 889.800">R1</text></g>
          <g><path d="M828 600h-24q-6.500 0-6.500 6.500v14q0 6.500 6.500 6.500h24l-3-2v-23zM844 600h24q6.500 0 6.500 6.500v14q0 6.500-6.500 6.500h-24l3-2v-23z" fill="#e4e4e4" stroke="#ffff3c" stroke-width="2.400"/><path d="M821 603h30v21h-30z" fill="#2c2c30"/><path d="M815 603h6.500v21H815zM851 603h6.500v21H851z" fill="#fff"/><path d="M814.500 603v21M858 603v21" stroke="#bbb"/></g>
          <path d="M561.500 793h5v9h-5z" fill="#0c0"/><path d="M564 783l5 10.500q-5 2-10 0z" fill="#0f0"/>
          <path d="M570 804.500h8v5h-8z" fill="#d00"/><path d="M588 807l-10.500-5q-2 5 0 10z" fill="#f00"/>
          <circle cx="564" cy="807" r="6.700" fill="#0000a8"/>
        </svg>
      </div>
      <div class="views">
        <button><svg><path d="M8 .6l7 3.600v7.600L8 15.400 1 11.800V4.200z" fill="#b4b4b4"/><path d="M8 8l7-3.800v7.600L8 15.400z" fill="#999"/><use href="#cube"/></svg></button>
        <button><svg><use href="#cube"/></svg></button>
        <button class="gap1"><svg><path d="M1 4.200L8 .6V8l-7 3.800z" fill="#39b4ea"/><use href="#cube"/></svg></button>
        <button><svg><path d="M8 8l7-3.800v7.600L8 15.400z" fill="#39b4ea"/><use href="#cube"/></svg></button>
        <button><svg><path d="M1 4.200L8 8v7.400l-7-3.600z" fill="#39b4ea"/><use href="#cube"/></svg></button>
        <button><svg><path d="M8 .6l7 3.600v7.600L8 8z" fill="#39b4ea"/><use href="#cube"/></svg></button>
        <button><svg><path d="M8 .6l7 3.600L8 8 1 4.200z" fill="#39b4ea"/><use href="#cube"/></svg></button>
        <button><svg><path d="M8 8l7 3.800-7 3.600-7-3.600z" fill="#39b4ea"/><use href="#cube"/></svg></button>
        <button class="gap2"><svg fill="none" stroke="#1a81c4" stroke-width="1.600"><path d="M1.500 6Q3 1 8 1t6.500 4.500M14.500 10q-1.500 5-6.500 5t-6.500-4.500M15 1v5h-5M1 15v-5h5"/></svg></button>
        <button><svg fill="none" stroke="#888"><circle cx="7" cy="4" r="3"/><circle cx="4" cy="6" r="3" stroke="#8cc4e8"/><circle cx="7" cy="8" r="3"/><circle cx="10" cy="6" r="3"/><use href="#gear" x="7" y="7" width="9" height="9"/></svg></button>
      </div>
    </div>
  </div>
  <div class="dfoot"><span>Library link:</span><span>Resistor_SMD:R_0201_0603Metric</span><button class="ok"><u>O</u>K</button><button><u>C</u>ancel</button></div>
  <svg class="grip" width="8" height="8" fill="#bbb"><path d="M6 0h2v2H6zM3 3h2v2H3zM6 3h2v2H6zM0 6h2v2H0zM3 6h2v2H3zM6 6h2v2H6z"/></svg>
</div>
</body>
</html>
```
FILE: styles.css
```css
* { box-sizing: border-box; }
body { margin: 0; width: 1920px; height: 1080px; overflow: hidden; background: #f0f0f0; font: 11.25px/16px "Open Sans", "Noto Sans", sans-serif; color: #000; display: flex; flex-direction: column; }
svg { display: block; flex: none; }
u { text-underline-offset: 1.5px; }
.defs { position: absolute; }
.i { width: 24px; height: 24px; overflow: visible; }
.i .it { font: italic 9px "Open Sans", sans-serif; fill: #545454; }
.i .unit { font: 600 12px "Open Sans", sans-serif; fill: #545454; text-anchor: middle; }

.titlebar { height: 23px; background: #fff; display: flex; align-items: center; padding: 0 16px 0 2px; gap: 5px; color: #999; }
.titlebar .winctl { margin-left: auto; margin-top: -3px; }
.menu { height: 18px; background: #fff; display: flex; gap: 13.800px; padding: 2px 7px 0; color: #6d6d6d; }

.bar { display: flex; align-items: center; }
.bar b { width: 32px; height: 32px; display: flex; align-items: center; justify-content: center; flex: none; }
.bar hr { width: 1px; height: 26px; margin: 0 4px 0 3px; border: 0; background: #8c8c8c; flex: none; }
.bar1 { height: 38px; padding-left: 4px; }
.bar2 { height: 32px; padding: 0 0 2px 5px; }
.bar2 .combo { margin-bottom: 1px; }
.bar2 b.on { width: 30px; height: 30px; margin: 0 1px 0 2px; }
.bar2 hr.m1 { margin: 0 5px 0 4px; }
.bar2 hr.m2 { margin: 0 5px 0 7px; }
.bar2 hr.m3 { margin: 0 5px 0 4px; }
.bar2 .w150 { margin-left: 1px; }
.on { background: #b3d7f5; border: 1px solid #0078d7; }
.combo { height: 23px; border: 1px solid #adadad; background: #e1e1e1; display: flex; align-items: center; padding: 0 4px 0 3px; white-space: nowrap; flex: none; }
.combo svg { margin-left: auto; }
.w158 { width: 158px; } .w150 { width: 150px; } .w167 { width: 167px; } .w96 { width: 96px; }
.combo.lay { width: 137px; height: 22px; margin-bottom: 2px; background: #fff; border-color: #707070; padding-left: 6px; }
.lay i { width: 14px; height: 14px; background: #4d7fc4; border: 1px solid #000; margin-right: 5px; }
.pair { margin-left: 5px; }

.work { height: 875px; display: flex; }
.tools { width: 35px; display: flex; flex-direction: column; align-items: center; padding-top: 4px; border-right: 1px solid #a0a0a0; }
.tools b { width: 30px; height: 30px; margin: 1px 0; display: flex; align-items: center; justify-content: center; flex: none; }
.tools hr { width: 26px; height: 1px; margin: 3px 0 4px; border: 0; background: #8c8c8c; flex: none; }
.tools.right { position: relative; border: 0; border-left: 1px solid #a0a0a0; }
.corners { position: absolute; right: 2px; top: 132px; }
.canvas { border-top: 1px solid #a0a0a0; height: 875px; }
.fab text, .silk text { font-family: "DejaVu Sans"; font-weight: 200; text-anchor: middle; stroke-linejoin: round; }
.fab text { font-size: 119.500px; fill: #afafaf; stroke: #afafaf; stroke-width: 10px; }
.silk text { font-size: 101.500px; fill: #fff; stroke: #fff; stroke-width: 8.600px; }

.appear { width: 274px; border-left: 4px solid #dcdcdc; display: flex; flex-direction: column; }
.appear h2 { margin: 0; height: 21px; font-size: 11.25px; font-weight: 400; line-height: 19px; padding-left: 3px; background: #bababa; letter-spacing: .2px; }
.tabs { display: flex; align-items: flex-end; height: 28px; padding-left: 1px; }
.tabs span { height: 20px; border: 1px solid #d9d9d9; border-bottom: 0; border-left: 0; padding: 1px 4px; width: 51px; }
.tabs span.sel { height: 24px; width: 51px; background: #fff; padding: 3px 6px; border-left: 1px solid #d9d9d9; }
.tabs span:last-child { width: 46px; padding-left: 5px; }
.sheet { margin: 0 3px 0 1px; height: 602px; background: #fff; border: 1px solid #dcdcdc; border-left-color: #fff; padding: 1px 1px 0 2px; }
.layers { margin: 0; padding: 0; height: 575px; background: #f0f0f0; list-style: none; }
.layers li { height: 18px; display: flex; align-items: center; padding-left: 17px; letter-spacing: .25px; font-size: 11px; }
.layers li.cur { background: #e1e1e1; position: relative; }
.layers li.cur::before { content: ""; position: absolute; left: 6px; top: 4px; border: solid transparent; border-width: 4.500px 0 4.500px 5px; border-left-color: #3c3cf0; }
.layers i { width: 14px; height: 11px; }
.layers svg { width: 16px; height: 15px; margin: 0 5px 0 6px; }
.c1 { background: #c83434; } .c2 { background: #4d7fc4; } .c3 { background: #840084; } .c4 { background: #000084; }
.c5 { background: #a39289; } .c6 { background: #00b0ad; } .c7 { background: #f2eda1; } .c8 { background: #e8b2a7; }
.c9 { background: repeating-conic-gradient(#562667 0 25%, #6c3f7c 0 50%) 0 0 / 10px 8px; }
.c10 { background: repeating-conic-gradient(#02695c 0 25%, #207f74 0 50%) 0 0 / 10px 8px; }
.c11 { background: #d0d2cd; } .c12 { background: #ff26e2; } .c13 { background: #26e9ff; } .c14 { background: #afafaf; } .c15 { background: #585d84; }
.u1 { background: #c2c2c2; } .u2 { background: #5994dc; } .u3 { background: #b4dbd2; } .u4 { background: #d8c852; }
.ldo { display: flex; align-items: center; gap: 1px; padding-left: 11px; height: 22px; color: #6d6d6d; }
.presets { padding: 11px 7px 0; height: 100px; display: flex; flex-direction: column; }
.presets label { height: 16px; margin-bottom: 1px; }
.presets .combo { margin-bottom: 3px; height: 23px; }
.appear .second { margin-top: 0; height: 25px; border-top: 4px solid #dcdcdc; }
.filter { display: grid; grid-template-columns: 92px 1fr; grid-auto-rows: 15px; padding: 5px 0 0 5px; font-size: 11px; line-height: 15px; }
.filter span { display: flex; align-items: center; gap: 3px; letter-spacing: .1px; }
.filter svg { width: 13px; height: 13px; }

.info { height: 32px; display: flex; color: #6d6d6d; line-height: 15px; padding: 0 0 0 11px; border-top: 1px solid #a0a0a0; border-bottom: 1px solid #d5d5d5; white-space: nowrap; }
.info div { width: 42px; }
.info div:nth-child(2) { width: 85px; } .info div:nth-child(3) { width: 87px; } .info div:nth-child(4) { width: 74px; }
.info .wide { width: 473px; letter-spacing: -.03px; } .info .doc { width: auto; letter-spacing: .042px; }
.status { height: 22px; display: flex; align-items: center; line-height: 22px; padding-bottom: 1px; }
.status span { height: 20px; border-right: 1px solid #d5d5d5; padding-left: 4px; white-space: nowrap; }
.status span:nth-child(1) { width: 850px; padding-left: 2px; letter-spacing: .05px; } .status span:nth-child(2) { width: 78px; } .status span:nth-child(3) { width: 160px; }
.status span:nth-child(4) { width: 251px; } .status span:nth-child(5) { width: 184px; } .status span:nth-child(6) { width: 66px; } .status span:nth-child(7) { width: 173px; }

.taskbar { height: 40px; display: flex; background: linear-gradient(90deg, #24282a, #2a2425 42%, #431d22 52%, #481c22 75%, #431d21); color: #fff; }
.taskbar b { width: 49px; display: flex; align-items: center; justify-content: center; flex: none; }
.taskbar b:first-child { width: 50px; padding-right: 3px; }
.t { width: 24px; height: 24px; }
.t .m { font: bold 10.5px "Roboto", sans-serif; }
.t .ki { font: bold 17px "Open Sans", sans-serif; }
.taskbar .run { box-shadow: inset 0 -2px #76b9ed; border: solid transparent; border-width: 0 2px; background-clip: padding-box; }
.taskbar .act { background-color: #6b4a4e; }
.taskbar .chrome { background-color: #2c5a34; }
.tray { display: flex; align-items: center; flex: 1; padding-left: 31px; }
.tray span:nth-child(2) { margin-left: -3px; }
.tray .clock { text-align: center; line-height: 18px; width: 62px; margin: 0 13px 0 9px; padding-bottom: 1px; }

.dialog { position: absolute; left: 335px; top: 167px; width: 858px; height: 724px; background: #f0f0f0; outline: 1px solid #333; box-shadow: 0 4px 14px rgba(0,0,0,.5); }
.dtitle { height: 30px; background: #fff; display: flex; align-items: center; gap: 6px; padding: 0 9px; }
.dtitle svg:last-child { margin: 0 1px 2px auto; }
.dtabs { height: 32px; display: flex; align-items: flex-end; padding-left: 12px; }
.dtabs span { height: 20px; border: 1px solid #d9d9d9; border-bottom: 0; padding: 2px 4px; white-space: nowrap; }
.dtabs .g { width: 52px; }
.dtabs .c { width: 184px; border-left: 0; padding-left: 6px; border-right: 0; }
.dtabs .sel { height: 24px; margin-bottom: -1px; width: 72px; background: #fff; padding: 3px 6px; position: relative; }
.dpanel { margin-left: 10px; width: 837px; height: 618px; background: #fff; border: 1px solid #dcdcdc; padding: 6px 7px 0 8px; }
.table { width: 820px; height: 93px; border: 1px solid #646464; }
.th { height: 22px; background: #f0f0f0; display: flex; line-height: 21px; border-top: 1px solid #ddd; }
.th span { border-right: 1px solid #d0d0d0; padding-left: 3px; width: 758px; }
.th span:first-child { width: 20px; } .th span:last-child { flex: 1; }
.tr { display: flex; align-items: center; padding-left: 21px; margin-top: 1px; }
.edit { width: 757px; height: 21px; border: 1px solid #0078d7; display: flex; align-items: center; justify-content: space-between; padding: 0 2px 0 4px; margin-right: 13px; }
.edit mark { background: #0078d7; color: #fff; line-height: 16px; width: 388px; white-space: nowrap; }
.btns { display: flex; padding: 6px 1px 0; gap: 6px; height: 42px; width: 820px; }
button { font: inherit; height: 21px; padding: 0; background: #e1e1e1; border: 1px solid #adadad; color: #000; display: flex; align-items: center; justify-content: center; flex: none; }
.sq { width: 23px; }
.trash { margin-left: 15px; }
.conf { width: 113px; margin-left: auto; }
.cols { display: flex; width: 820px; }
.sets { width: 168px; margin-right: 10px; }
fieldset { margin: 0; padding: 3px 0 0 8px; border: 1px solid #dcdcdc; height: 133px; min-width: 0; }
legend { height: 16px; line-height: 18px; padding: 0 2px; margin-left: -2px; }
.row { height: 32px; margin-bottom: 4px; display: flex; align-items: center; }
.row label { width: 19px; padding-left: 1px; }
.row input { width: 110px; height: 23px; border: 1px solid #7a7a7a; font: inherit; padding: 0 5px 3px; background: #fff; margin-right: 4px; }
.spin { width: 15px; height: 32px; display: flex; flex-direction: column; }
.spin i { height: 16px; border: 1px solid #adadad; background: #ececec; display: flex; align-items: center; justify-content: center; }
.spin i::after { content: ""; border: solid transparent; border-width: 0 3px 3px; border-bottom-color: #000; }
.spin .dn::after { border-width: 3px 3px 0; border-top-color: #000; }
fieldset.opac { height: 68px; padding-top: 4px; }
.slide { display: flex; align-items: center; height: 19px; padding-left: 1px; }
.slide span:first-child { width: 18px; }
.slide svg + span { margin-left: 10px; }
.val { width: 139px; text-align: center; line-height: 17px; }
.prev .cap { height: 17px; line-height: 18px; padding-left: 10px; }
.prev { width: 608px; margin-right: 11px; }
.views { padding-top: 17px; }
.views button { width: 22px; height: 22px; margin-bottom: 7px; }
.views svg { width: 16px; height: 16px; }
.views .gap1 { margin-top: 85px; }
.views .gap2 { margin-top: 81px; }
.dfoot { display: flex; align-items: center; padding: 0 10px 0 12px; height: 55px; gap: 10px; }
.dfoot span { letter-spacing: -.1px; }
.dfoot span + span { margin-left: -2px; letter-spacing: -.2px; }
.dfoot button { width: 73px; }
.dfoot .ok { margin-left: auto; border: 2px solid #0078d7; }
.grip { position: absolute; right: 3px; bottom: 2px; }
```
